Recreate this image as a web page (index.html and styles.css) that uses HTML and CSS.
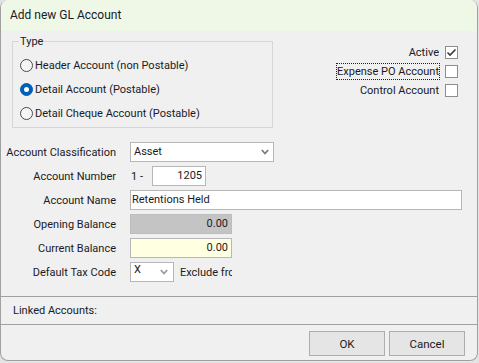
FILE: index.html
```html
<!DOCTYPE html>
<html lang="en">
<head>
    <meta charset="UTF-8">
    <meta name="viewport" content="width=device-width, initial-scale=1.0">
    <title>Add new GL Account</title>
    <link rel="stylesheet" href="styles.css">
</head>
<body>
    <div class="dialog">
        <div class="titlebar">Add new GL Account</div>

        <div class="top">
            <fieldset class="type-group">
                <legend>Type</legend>
                <label class="radio-row"><span class="radio"></span>Header Account (non Postable)</label>
                <label class="radio-row"><span class="radio checked"></span>Detail Account (Postable)</label>
                <label class="radio-row"><span class="radio"></span>Detail Cheque Account (Postable)</label>
            </fieldset>

            <div class="flags">
                <div class="flag-row">
                    <span class="flag-label">Active</span>
                    <span class="checkbox">
                        <svg width="11" height="11" viewBox="0 0 11 11"><polyline points="1.5,5.5 4,8 9.5,2.5" fill="none" stroke="#3a3a3a" stroke-width="1.6"/></svg>
                    </span>
                </div>
                <div class="flag-row">
                    <span class="flag-label focused">Expense PO Account</span>
                    <span class="checkbox"></span>
                </div>
                <div class="flag-row">
                    <span class="flag-label">Control Account</span>
                    <span class="checkbox"></span>
                </div>
            </div>
        </div>

        <div class="form">
            <div class="field-label">Account Classification</div>
            <div class="input combo classification">
                <span>Asset</span>
                <svg class="chevron" width="8" height="6" viewBox="0 0 8 6"><polyline points="0.8,1 4,4.5 7.2,1" fill="none" stroke="#7b7b7b" stroke-width="1.8"/></svg>
            </div>

            <div class="field-label">Account Number</div>
            <div class="number-row">
                <span class="prefix">1 -</span>
                <div class="input number">1205</div>
            </div>

            <div class="field-label">Account Name</div>
            <div class="input name">Retentions Held</div>

            <div class="field-label">Opening Balance</div>
            <div class="input amount readonly">0.00</div>

            <div class="field-label">Current Balance</div>
            <div class="input amount highlight">0.00</div>

            <div class="field-label">Default Tax Code</div>
            <div class="tax-row">
                <div class="input combo tax">
                    <span class="tax-code">X</span>
                    <svg class="chevron" width="8" height="6" viewBox="0 0 8 6"><polyline points="0.8,1 4,4.5 7.2,1" fill="none" stroke="#9a9a9a" stroke-width="1.8"/></svg>
                </div>
                <span class="tax-desc">Exclude from GST</span>
            </div>
        </div>

        <div class="linked">Linked Accounts:</div>

        <div class="buttons">
            <button>OK</button>
            <button>Cancel</button>
        </div>
    </div>
</body>
</html>
```

FILE: styles.css
```css
/* Reset */
body, fieldset, legend {
    margin: 0;
    padding: 0;
}

body {
    font-family: Roboto, "Noto Sans", sans-serif;
    font-size: 11px;
    color: #1a1a24;
    background-color: #e4e4e4;
}

/* Dialog frame */
.dialog {
    width: 476px;
    height: 360px;
    background-color: #f0f0f0;
    border: 1px solid #a0a0a0;
    border-top: none;
    border-radius: 8px;
    overflow: hidden;
    display: flex;
    flex-direction: column;
}

.titlebar {
    height: 31px;
    line-height: 31px;
    padding-left: 9px;
    font-size: 12px;
    background-color: #eff8e7;
    flex-shrink: 0;
}

/* Type group and flags */
.top {
    display: flex;
    justify-content: space-between;
    padding: 4px 19px 0 11px;
}

.type-group {
    width: 261px;
    box-sizing: border-box;
    border: 1px solid #d6d6d6;
    padding: 5px 6px 2px 6px;
}

.type-group legend {
    padding: 0 1px;
    line-height: 13px;
}

.radio-row {
    display: flex;
    align-items: center;
    height: 24px;
    padding-left: 1px;
}

.radio {
    width: 13px;
    height: 13px;
    box-sizing: border-box;
    border: 1px solid #4a4a4a;
    border-radius: 50%;
    background-color: #f6f6f6;
    margin-right: 2px;
    display: flex;
    align-items: center;
    justify-content: center;
}

.radio.checked {
    background-color: #005fb8;
    border-color: #005fb8;
}

.radio.checked::after {
    content: "";
    width: 5px;
    height: 5px;
    border-radius: 50%;
    background-color: #fff;
}

.flags {
    display: flex;
    flex-direction: column;
    align-items: flex-end;
    padding-top: 8px;
}

.flag-row {
    display: flex;
    align-items: center;
    height: 19px;
}

.flag-label {
    margin-right: 6px;
    line-height: 15px;
}

.flag-label.focused {
    outline: 1px dotted #222;
    outline-offset: 0;
}

.checkbox {
    width: 13px;
    height: 13px;
    box-sizing: border-box;
    border: 1px solid #8d8d8d;
    background-color: #fff;
    display: flex;
    align-items: center;
    justify-content: center;
}

/* Account fields */
.form {
    display: grid;
    grid-template-columns: 115px auto;
    grid-auto-rows: 20px;
    column-gap: 14px;
    row-gap: 4px;
    align-items: center;
    justify-items: start;
    margin-top: 14px;
}

.field-label {
    justify-self: end;
}

.input {
    height: 20px;
    box-sizing: border-box;
    border: 1px solid #b7b7b7;
    background-color: #fff;
    padding: 0 3px;
    line-height: 18px;
    white-space: nowrap;
}

.combo {
    display: flex;
    align-items: center;
    justify-content: space-between;
    padding-right: 4px;
}

.classification {
    width: 144px;
}

.number-row, .tax-row {
    display: flex;
    align-items: center;
}

.prefix {
    margin-left: 1px;
    width: 21px;
}

.number {
    width: 54px;
    text-align: right;
}

.name {
    width: 332px;
    padding-left: 1px;
}

.amount {
    width: 102px;
    text-align: right;
}

.readonly {
    background-color: #c4c4c4;
    border-color: #bdbdbd;
}

.highlight {
    background-color: #ffffe1;
}

.tax {
    width: 44px;
    padding-right: 5px;
    align-items: flex-start;
}

.tax .chevron {
    align-self: center;
}

.tax-code {
    line-height: 14px;
}

.tax-desc {
    margin-left: 6px;
    width: 52px;
    overflow: hidden;
    white-space: nowrap;
}

/* Linked accounts and buttons */
.linked {
    margin-top: 14px;
    height: 27px;
    line-height: 27px;
    padding-left: 12px;
    border-top: 1px solid #a0a0a0;
    border-bottom: 1px solid #a0a0a0;
}

.buttons {
    display: flex;
    justify-content: flex-end;
    gap: 4px;
    padding: 6px 12px 0 0;
}

.buttons button {
    width: 76px;
    height: 25px;
    border: 1px solid #adadad;
    background-color: #e5e5e5;
    font-family: inherit;
    font-size: 11.5px;
    color: #1a1a24;
}
```
